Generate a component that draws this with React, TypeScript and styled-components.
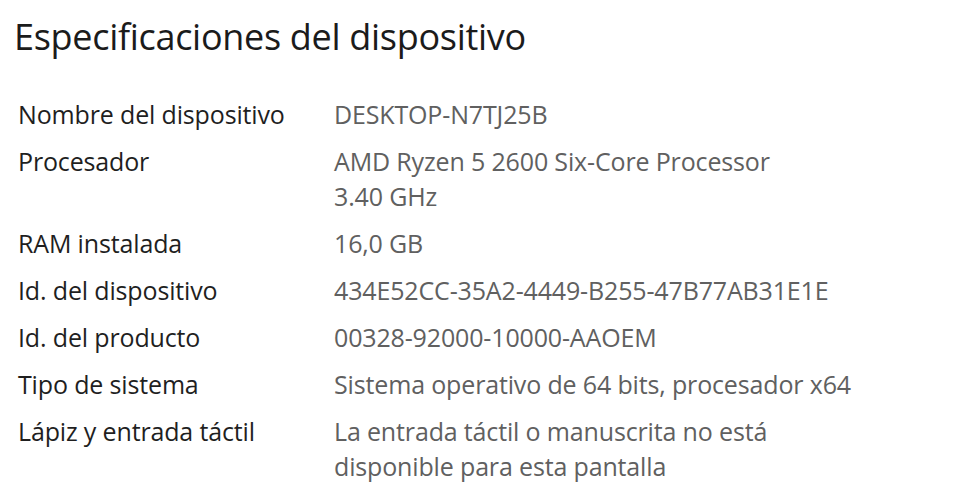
import React from 'react';
import styled, { createGlobalStyle } from 'styled-components';

const GlobalStyle = createGlobalStyle`
  html, body {
    margin: 0;
    padding: 0;
    background: #ffffff;
  }
  body {
    font-family: "Open Sans", "Noto Sans", "Liberation Sans", sans-serif;
  }
`;

const Page = styled.div`
  width: 961px;
  height: 500px;
  overflow: hidden;
  padding: 13px 0 0 14px;
  box-sizing: border-box;
`;

const Title = styled.h1`
  margin: 0 0 36px;
  font-size: 36px;
  font-weight: 400;
  line-height: 48px;
  color: #1b1b1b;
  letter-spacing: -0.3px;
`;

const SpecGrid = styled.dl`
  display: grid;
  grid-template-columns: 316px 1fr;
  row-gap: 12px;
  margin: 0;
  padding-left: 4px;
`;

const Label = styled.dt`
  margin: 0;
  font-size: 25px;
  line-height: 35px;
  color: #1f1f1f;
  letter-spacing: -0.15px;
`;

const Value = styled.dd`
  margin: 0;
  font-size: 25px;
  line-height: 35px;
  color: #606060;
  letter-spacing: -0.15px;
  white-space: pre-line;
`;

const specs: [string, string][] = [
  ['Nombre del dispositivo', 'DESKTOP-N7TJ25B'],
  ['Procesador', 'AMD Ryzen 5 2600 Six-Core Processor\n3.40 GHz'],
  ['RAM instalada', '16,0 GB'],
  ['Id. del dispositivo', '434E52CC-35A2-4449-B255-47B77AB31E1E'],
  ['Id. del producto', '00328-92000-10000-AAOEM'],
  ['Tipo de sistema', 'Sistema operativo de 64 bits, procesador x64'],
  ['Lápiz y entrada táctil', 'La entrada táctil o manuscrita no está\ndisponible para esta pantalla'],
];

export default function App() {
  return (
    <Page>
      <GlobalStyle />
      <Title>Especificaciones del dispositivo</Title>
      <SpecGrid>
        {specs.map(([label, value]) => (
          <React.Fragment key={label}>
            <Label>{label}</Label>
            <Value>{value}</Value>
          </React.Fragment>
        ))}
      </SpecGrid>
    </Page>
  );
}
